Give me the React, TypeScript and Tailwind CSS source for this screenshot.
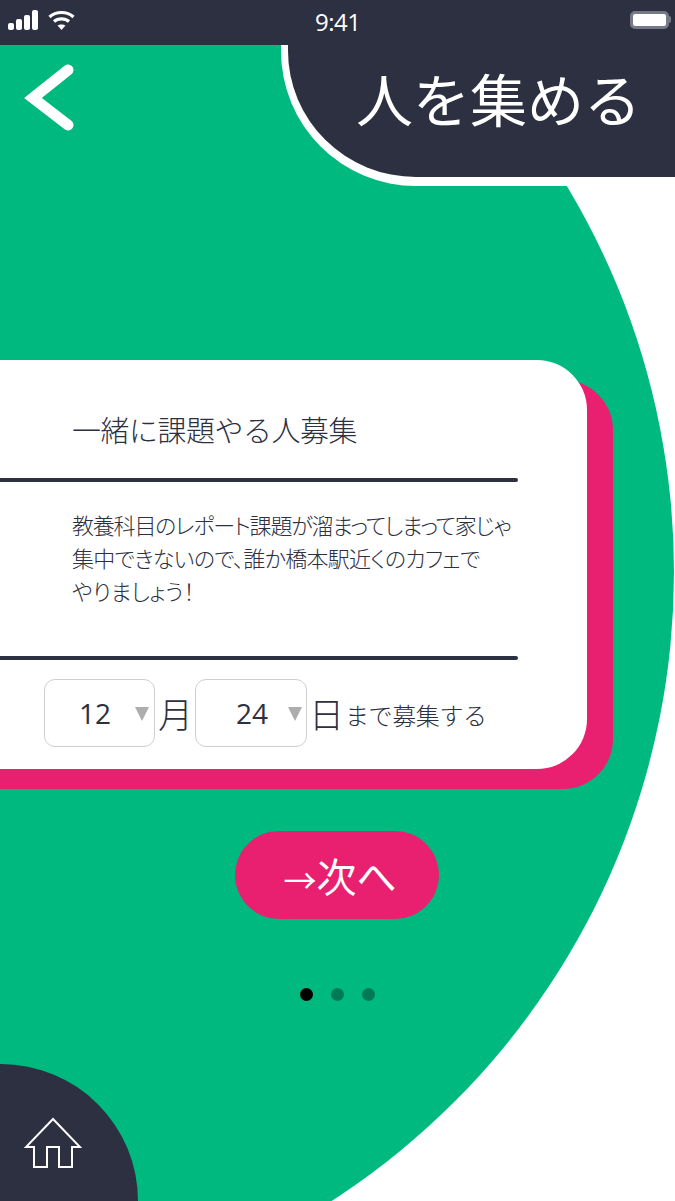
const jp = { fontFamily: '"Noto Sans CJK JP", sans-serif' };

function StatusBar() {
  return (
    <div className="relative z-10 flex h-[45px] items-center justify-between bg-[#2d3040] pl-[8px] pr-[4px] pb-[6px]">
      <div className="flex items-center gap-[9px]">
        <svg width="31" height="20" viewBox="0 0 31 20" fill="#fff">
          <rect x="0" y="13" width="6" height="7" rx="2" />
          <rect x="8" y="9" width="6" height="11" rx="2" />
          <rect x="16" y="5" width="6" height="15" rx="2" />
          <rect x="24" y="0" width="6" height="20" rx="2" />
        </svg>
        <svg width="27" height="20" viewBox="0 0 27 20" fill="none" stroke="#fff" strokeWidth="3.2">
          <path d="M1.5 7 C8 1 19 1 25.5 7" />
          <path d="M6 11.5 C10 8 17 8 21 11.5" />
          <path d="M13.5 20 L9.5 15.5 C11.5 14 15.5 14 17.5 15.5 Z" fill="#fff" stroke="none" />
        </svg>
      </div>
      <span className="absolute left-[315px] top-[7px] text-[24px] leading-[30px] tracking-[-0.5px] text-white" style={{ fontFamily: '"Open Sans", sans-serif' }}>
        9:41
      </span>
      <div className="flex items-center">
        <div className="h-[18px] w-[39px] rounded-[5px] border-[3px] border-[#777a86] bg-white" />
        <div className="h-[7px] w-[2px] rounded-r-sm bg-[#777a86]" />
      </div>
    </div>
  );
}

function Header() {
  return (
    <div className="relative z-10 flex h-[141px] items-start justify-between">
      <svg className="ml-[24px] mt-[18px]" width="52" height="70" viewBox="0 0 52 70" fill="none" stroke="#fff" strokeWidth="11" strokeLinecap="round" strokeLinejoin="miter">
        <path d="M44 7 L9 35 L44 62" />
      </svg>
      <div className="h-[141px] w-[394px] rounded-bl-[135px] border-b-[9px] border-l-[7px] border-white bg-[#2d3040] pr-[34px] pt-[12px] text-right">
        <span className="text-[57px] font-normal leading-[80px] text-white" style={jp}>
          人を集める
        </span>
      </div>
    </div>
  );
}

function NumberBox({ value, className }: { value: string; className: string }) {
  return (
    <div className={`flex h-[68px] items-center rounded-[11px] border border-[#cfcfcf] bg-white ${className}`}>
      <span className="flex-1 text-center text-[28px] text-[#2d3040]" style={{ fontFamily: '"Open Sans", sans-serif' }}>
        {value}
      </span>
      <svg className="mt-[1px]" width="14" height="14" viewBox="0 0 14 14" fill="#adadad">
        <path d="M0 0 H14 L7 14 Z" />
      </svg>
    </div>
  );
}

function PostCard() {
  return (
    <div className="relative z-10 -ml-[40px] mt-[174px] h-[409px] w-[627px] shrink-0 rounded-r-[50px] bg-white pl-[40px] pt-[44px] text-[#2d3040] shadow-[26px_20px_0_0_#e8206f]" style={jp}>
      <div className="pl-[72px] text-[29px] font-light leading-[50px] tracking-[-0.5px]">一緒に課題やる人募集</div>
      <div className="mt-[24px] h-[4px] w-[518px] rounded-r-full bg-[#2d3040]" />
      <div className="h-[174px] pl-[72px] pt-[26px] text-[22px] font-light leading-[33px] [font-feature-settings:'palt']">
        <div className="tracking-[-1.2px]">教養科目のレポート課題が溜まってしまって家じゃ</div>
        <div className="tracking-[-0.7px]">集中できないので、誰か橋本駅近くのカフェで</div>
        <div>やりましょう！</div>
      </div>
      <div className="h-[4px] w-[518px] rounded-r-full bg-[#2d3040]" />
      <div className="mt-[19px] flex items-center pl-[44px]">
        <NumberBox value="12" className="w-[111px] pr-[5px] pl-[10px]" />
        <span className="w-[40px] pl-[3px] text-[35px] font-light">月</span>
        <NumberBox value="24" className="w-[112px] pr-[4px] pl-[20px]" />
        <span className="ml-[2px] text-[35px] font-light">日</span>
        <span className="ml-[1px] mt-[3px] text-[24px] font-light tracking-[-0.4px]">まで募集する</span>
      </div>
    </div>
  );
}

export default function App() {
  return (
    <div className="relative flex h-[1201px] w-[675px] flex-col overflow-hidden bg-white">
      {/* big green circle behind everything */}
      <div className="absolute left-[-824px] top-[-177px] h-[1498px] w-[1498px] rounded-full bg-[#00b97e]" />
      <StatusBar />
      <Header />
      <PostCard />
      <button className="relative z-10 ml-[235px] mt-[62px] flex h-[88px] w-[204px] shrink-0 items-center justify-center rounded-full bg-[#e8206f] pl-[6px] text-[40px] font-normal text-white" style={jp}>
        <span className="mt-[10px] text-[33px]">→</span>次へ
      </button>
      <div className="relative z-10 ml-[300px] mt-[69px] flex gap-[18px]">
        <div className="h-[13px] w-[13px] rounded-full bg-black" />
        <div className="h-[13px] w-[13px] rounded-full bg-[#007a55]" />
        <div className="h-[13px] w-[13px] rounded-full bg-[#007a55]" />
      </div>
      <div className="relative z-10 mt-auto flex h-[137px] w-[138px] items-end rounded-tr-[138px] bg-[#2d3040] pb-[32px] pl-[24px]">
        <svg width="58" height="52" viewBox="0 0 58 52" fill="none" stroke="#fff" strokeWidth="2">
          <path d="M29 2 L2 30 H10 V50 H23 V30 H35 V50 H48 V30 H56 Z" />
        </svg>
      </div>
    </div>
  );
}
